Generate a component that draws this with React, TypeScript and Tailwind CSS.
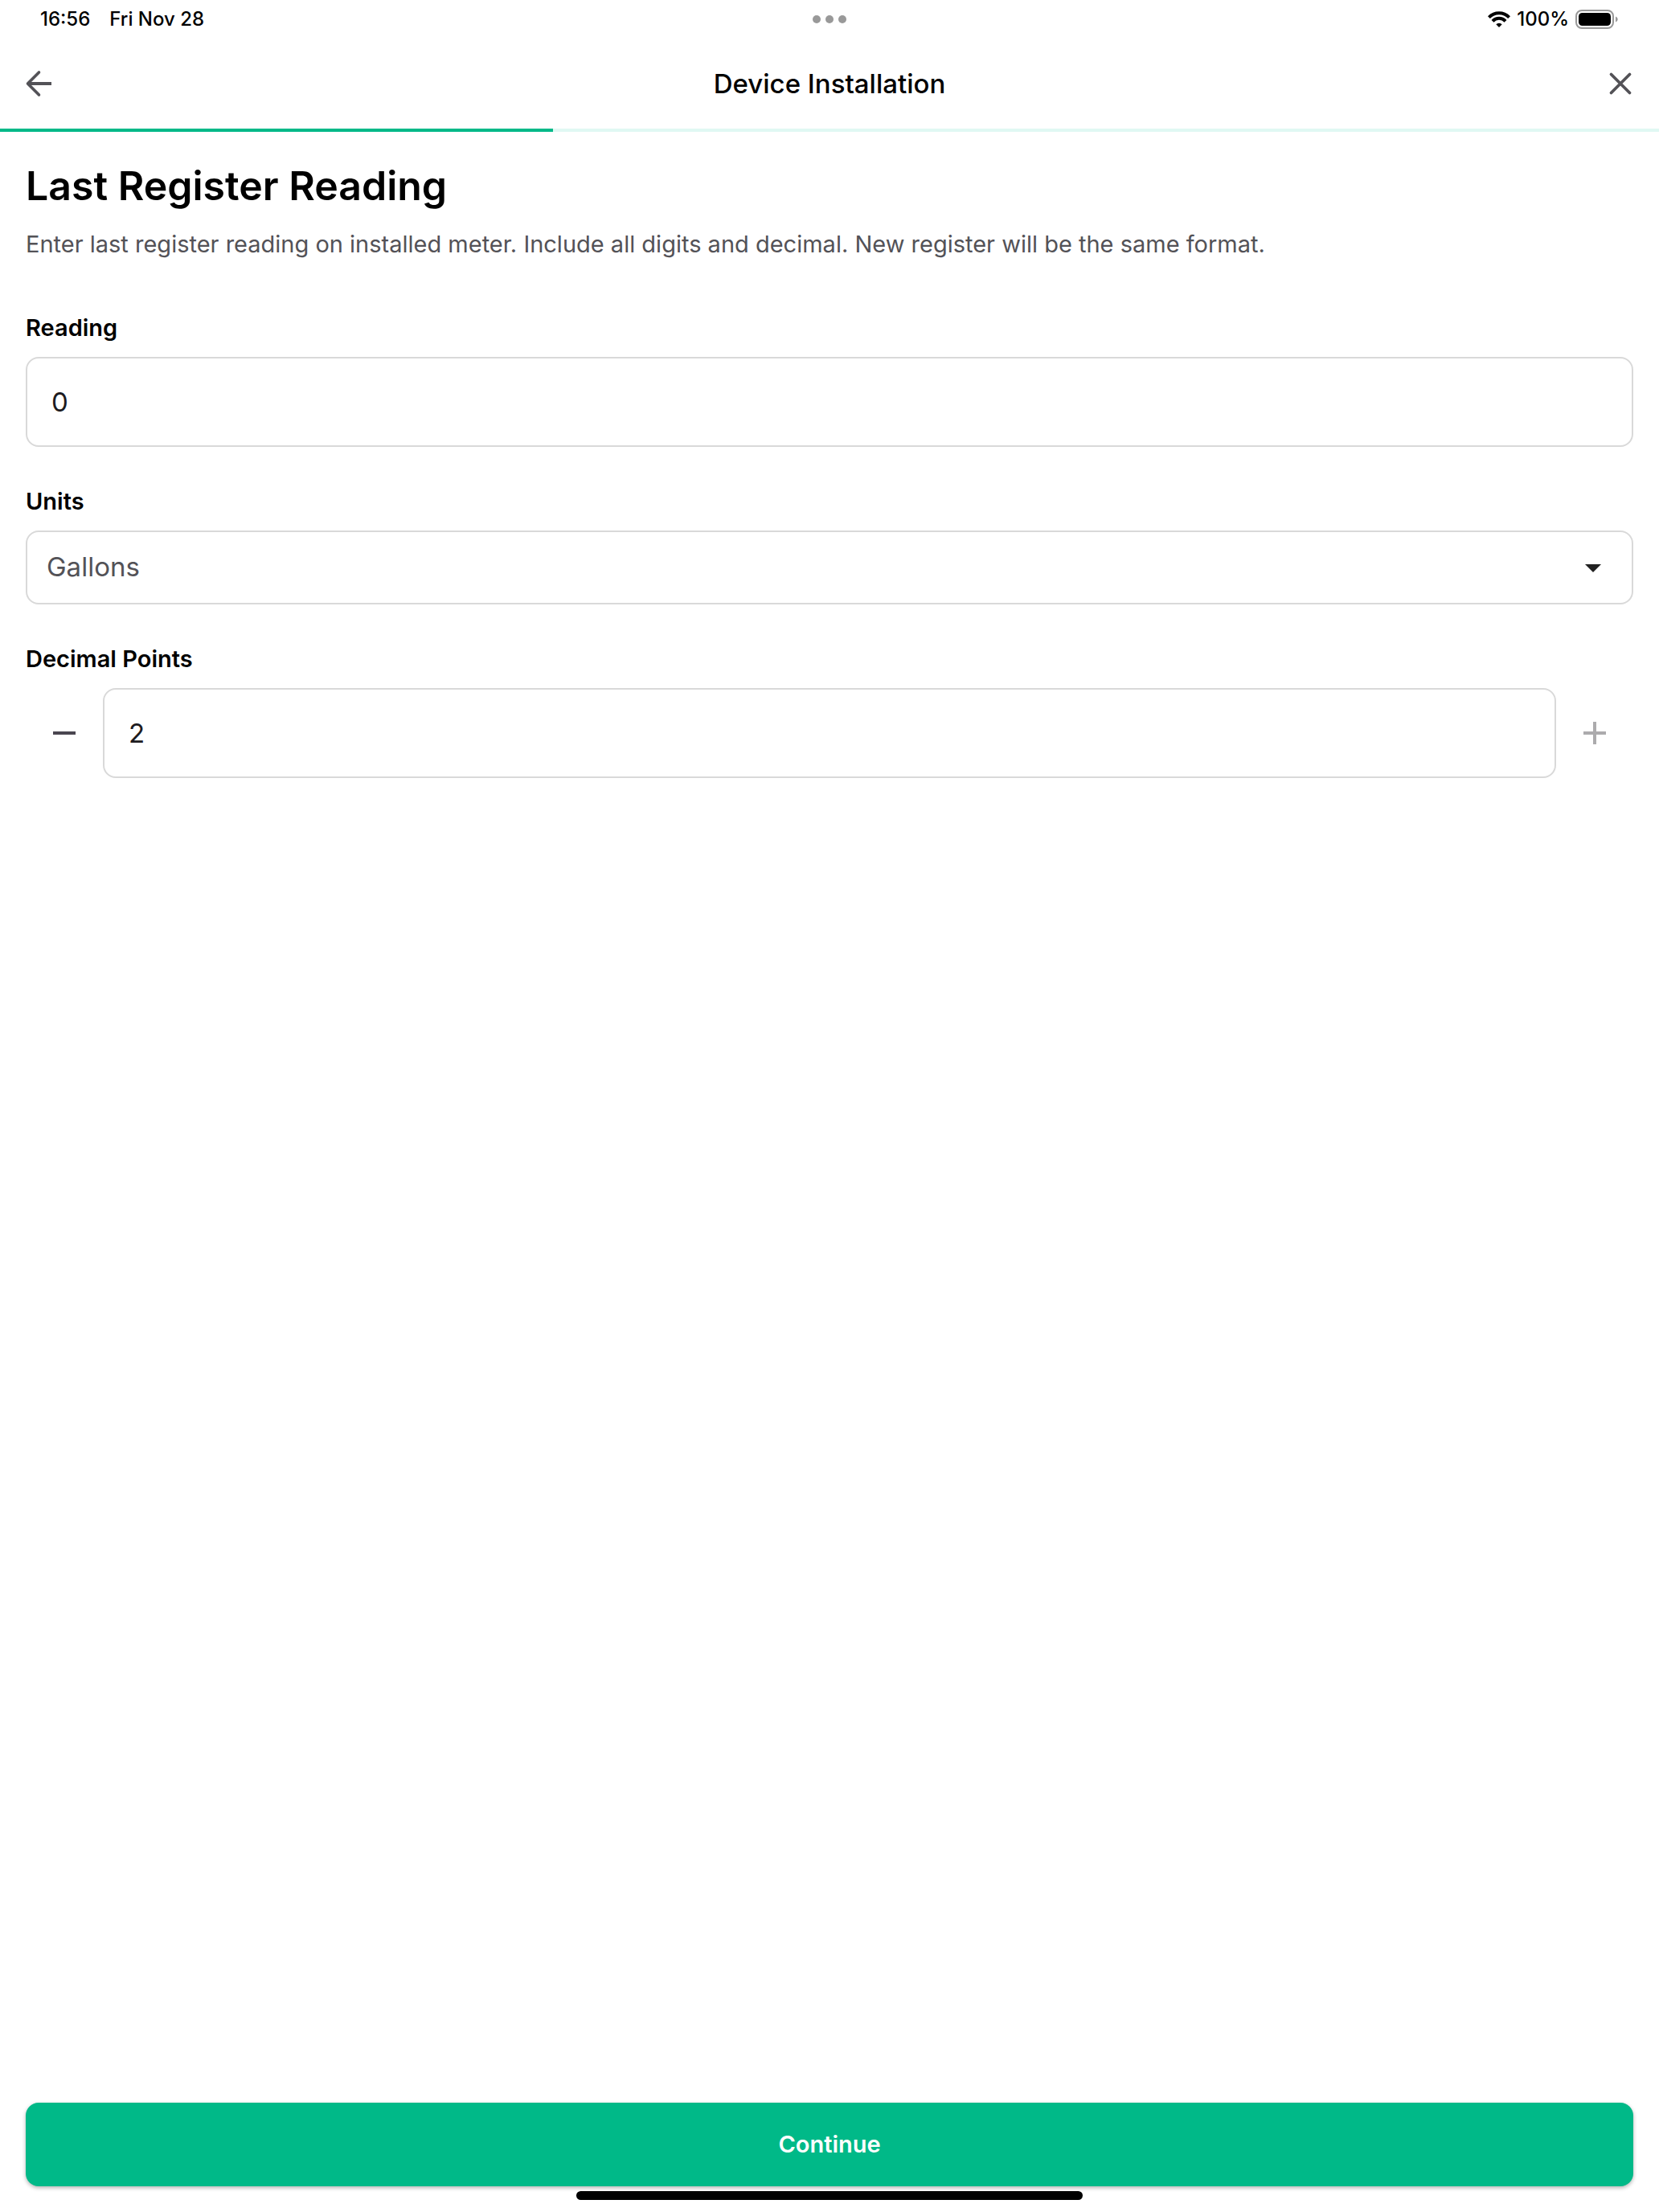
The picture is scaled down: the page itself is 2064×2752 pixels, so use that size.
import { useState } from "react";

function StatusBar() {
  return (
    <div className="grid h-12 grid-cols-3 items-center px-[50px] text-[24px] font-medium leading-8 text-black">
      <div className="flex gap-6">
        <span>16:56</span>
        <span>Fri Nov 28</span>
      </div>
      <div className="flex justify-center gap-1.5">
        <span className="size-2.5 rounded-full bg-[#999999]" />
        <span className="size-2.5 rounded-full bg-[#999999]" />
        <span className="size-2.5 rounded-full bg-[#999999]" />
      </div>
      <div className="flex items-center justify-end gap-2">
        <svg className="h-5 w-7" viewBox="0 0 28 20" fill="none" aria-hidden="true">
          <path d="M1.4 7.6A17.6 17.6 0 0 1 26.6 7.6" stroke="#000" strokeWidth="4" />
          <path d="M6 12.3A11 11 0 0 1 22 12.3" stroke="#000" strokeWidth="4" />
          <path d="M14 20l-3.7-3.7a5.3 5.3 0 0 1 7.4 0z" fill="#000" />
        </svg>
        <span>100%</span>
        <svg className="h-6 w-[54px]" viewBox="0 0 54 24" fill="none" aria-hidden="true">
          <rect x="1" y="1" width="46" height="22" rx="7" stroke="#999" strokeWidth="2" />
          <rect x="4" y="4" width="40" height="16" rx="4.5" fill="#000" />
          <path d="M50 8.5c3.6 1.4 3.6 5.6 0 7z" fill="#999" />
        </svg>
      </div>
    </div>
  );
}

function Header() {
  return (
    <header>
      <div className="flex h-28 items-center justify-between px-6 text-[#535257]">
        <button type="button" aria-label="Back" className="size-12">
          <svg className="size-12" viewBox="0 0 48 48" fill="none" stroke="currentColor" strokeWidth="4" aria-hidden="true">
            <path d="M40 24H12" />
            <path d="M24.5 10L10.5 24L24.5 38" strokeLinecap="round" strokeLinejoin="round" strokeWidth="3.6" />
          </svg>
        </button>
        <h1 className="text-[33px] font-medium leading-10 text-black">Device Installation</h1>
        <button type="button" aria-label="Close" className="size-12">
          <svg className="size-12" viewBox="0 0 48 48" fill="none" stroke="currentColor" strokeWidth="3.8" strokeLinecap="round" aria-hidden="true">
            <path d="M12.5 12.5L35.5 35.5M35.5 12.5L12.5 35.5" />
          </svg>
        </button>
      </div>
      <div role="progressbar" aria-label="Installation progress" aria-valuenow={33} className="h-1 bg-[#e0f8f3]">
        <div className="h-full w-1/3 bg-[#00b988]" />
      </div>
    </header>
  );
}

export default function App() {
  const [reading, setReading] = useState("0");
  const [units, setUnits] = useState("Gallons");
  const [decimals, setDecimals] = useState("2");
  const step = (by: number) => setDecimals(String(Math.min(2, Math.max(0, Number(decimals) + by))));

  return (
    <div className="flex min-h-screen flex-col bg-white font-[Inter,sans-serif]">
      <StatusBar />
      <Header />
      <main className="flex-1 px-8 pt-10">
        <h2 className="text-[50px] font-semibold leading-[54px] text-black">Last Register Reading</h2>
        <p className="mt-[26px] text-[29px] leading-10 text-[#535257]">
          Enter last register reading on installed meter. Include all digits and decimal. New register will be the same format.
        </p>

        <div className="mt-[68px] flex flex-col gap-5">
          <label htmlFor="reading" className="text-[29px] font-semibold leading-8 text-black">Reading</label>
          <input
            id="reading"
            value={reading}
            onChange={(e) => setReading(e.target.value)}
            className="h-28 w-full rounded-2xl border-2 border-[#d9d9d9] bg-white px-[30px] text-[33px] text-[#1d1b20]"
          />
        </div>

        <div className="mt-[52px] flex flex-col gap-5">
          <label htmlFor="units" className="text-[29px] font-semibold leading-8 text-black">Units</label>
          <div className="relative">
            <select
              id="units"
              value={units}
              onChange={(e) => setUnits(e.target.value)}
              className="block h-[92px] w-full appearance-none rounded-2xl border-2 border-[#d9d9d9] bg-white px-6 text-[33px] text-[#535257]"
            >
              <option>Gallons</option>
            </select>
            <svg className="pointer-events-none absolute inset-y-0 right-[26px] my-auto size-12" viewBox="0 0 24 24" fill="#212121" aria-hidden="true">
              <path d="M7 10l5 5 5-5z" />
            </svg>
          </div>
        </div>

        <div className="mt-[52px] flex flex-col gap-5">
          <label htmlFor="decimals" className="text-[29px] font-semibold leading-8 text-black">Decimal Points</label>
          <div className="flex items-center">
            <button type="button" aria-label="Decrease" onClick={() => step(-1)} className="flex size-24 items-center justify-center text-[#4a4650]">
              <svg className="size-12" viewBox="0 0 24 24" fill="currentColor" aria-hidden="true">
                <path d="M19 13H5v-2h14z" />
              </svg>
            </button>
            <input
              id="decimals"
              value={decimals}
              onChange={(e) => setDecimals(e.target.value)}
              className="h-28 min-w-0 flex-1 rounded-2xl border-2 border-[#d9d9d9] bg-white px-[30px] text-[33px] text-[#1d1b20]"
            />
            <button type="button" aria-label="Increase" onClick={() => step(1)} className="flex size-24 items-center justify-center text-[#acabad]">
              <svg className="size-12" viewBox="0 0 24 24" fill="currentColor" aria-hidden="true">
                <path d="M19 13h-6v6h-2v-6H5v-2h6V5h2v6h6z" />
              </svg>
            </button>
          </div>
        </div>
      </main>

      <footer className="flex flex-col items-center px-8 pb-[15px]">
        <button type="button" className="h-[104px] w-full rounded-2xl bg-[#00b988] text-[29px] font-semibold text-white shadow-[0_2px_5px_rgba(0,0,0,0.3)]">
          Continue
        </button>
        <div className="relative mt-1.5 h-[11px] w-[630px] max-w-full rounded-full bg-black" />
      </footer>
    </div>
  );
}
